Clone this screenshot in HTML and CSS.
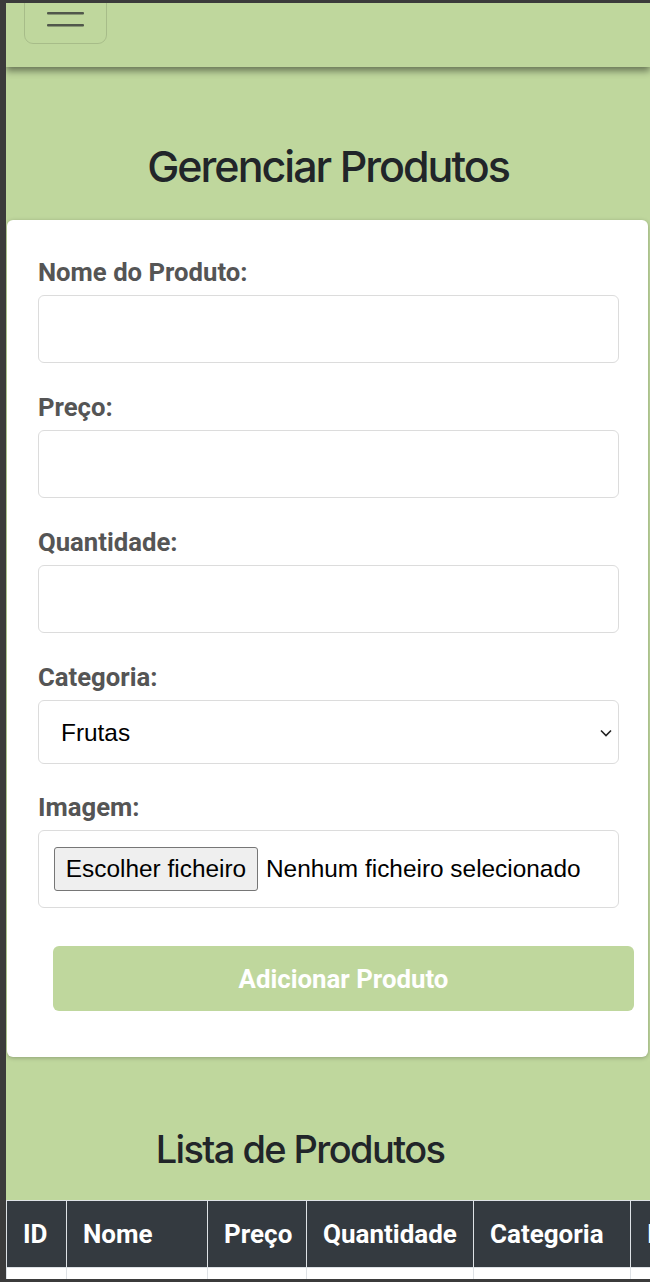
FILE: index.html
```html
<!DOCTYPE html>
<html lang="pt">
<head>
<meta charset="utf-8">
<title>Gerenciar Produtos</title>
<link rel="stylesheet" href="styles.css">
</head>
<body>
<div class="screen">
  <nav class="navbar">
    <button class="toggler" type="button" aria-label="Menu">
      <svg class="toggler-icon" width="37" height="30" viewBox="0 0 37 30">
        <rect x="0" y="1" width="37" height="2.5" rx="1" fill="#50574b"/>
        <rect x="0" y="13" width="37" height="2.5" rx="1" fill="#50574b"/>
        <rect x="0" y="25" width="37" height="2.5" rx="1" fill="#50574b"/>
      </svg>
    </button>
  </nav>

  <h2 class="title">Gerenciar Produtos</h2>

  <form class="card">
    <label class="field-label">Nome do Produto:</label>
    <input class="field-input" type="text">

    <label class="field-label">Preço:</label>
    <input class="field-input" type="text">

    <label class="field-label">Quantidade:</label>
    <input class="field-input" type="text">

    <label class="field-label">Categoria:</label>
    <div class="select-wrap">
      <select class="field-select">
        <option>Frutas</option>
        <option>Legumes</option>
        <option>Verduras</option>
      </select>
      <svg class="chevron" width="12" height="8" viewBox="0 0 12 8">
        <path d="M1 1.5 L6 6.5 L11 1.5" fill="none" stroke="#222" stroke-width="1.6"/>
      </svg>
    </div>

    <label class="field-label">Imagem:</label>
    <div class="file-box">
      <span class="file-btn">Escolher ficheiro</span>
      <span class="file-text">Nenhum ficheiro selecionado</span>
    </div>

    <button class="submit" type="button">Adicionar Produto</button>
  </form>

  <h2 class="list-title">Lista de Produtos</h2>

  <table class="products">
    <thead>
      <tr>
        <th class="c-id">ID</th>
        <th class="c-nome">Nome</th>
        <th class="c-preco">Preço</th>
        <th class="c-qtd">Quantidade</th>
        <th class="c-cat">Categoria</th>
        <th class="c-img">Imagem</th>
        <th class="c-acoes">Ações</th>
      </tr>
    </thead>
    <tbody>
      <tr>
        <td></td><td></td><td></td><td></td><td></td><td></td><td></td>
      </tr>
    </tbody>
  </table>
</div>
</body>
</html>
```

FILE: styles.css
```css
* { box-sizing: border-box; }

html, body {
  margin: 0;
  padding: 0;
}

body {
  background: #3b3b3b;
  overflow: hidden;
  height: 1282px;
}

.screen {
  margin: 3px 0 0 6px;
  height: 1276px;
  background: #bfd79d;
  overflow: hidden;
}

.navbar {
  position: relative;
  z-index: 1;
  height: 64px;
  background: #bfd79d;
  box-shadow: 0 4px 7px rgba(0, 0, 0, 0.45);
  display: flex;
  align-items: flex-start;
}

.toggler {
  margin: -15px 0 0 18px;
  width: 83px;
  height: 56px;
  padding: 0;
  background: transparent;
  border: 1px solid rgba(0, 0, 0, 0.12);
  border-radius: 9px;
  display: flex;
  align-items: flex-start;
  justify-content: center;
  padding-top: 10px;
}

.title {
  margin: 73px 0 28px 0;
  font-family: Inter, "Liberation Sans", sans-serif;
  font-weight: 500;
  font-size: 43px;
  line-height: 52px;
  letter-spacing: -2px;
  text-align: center;
  color: #212529;
}

.card {
  margin-left: 1px;
  width: 641px;
  background: #fff;
  border-radius: 6px;
  box-shadow: 0 1px 4px rgba(0, 0, 0, 0.25);
  padding: 37px 29px 46px 31px;
  display: flex;
  flex-direction: column;
}

.field-label {
  font-family: Roboto, "Liberation Sans", sans-serif;
  font-weight: 700;
  font-size: 25.7px;
  line-height: 30px;
  color: #555;
  margin-bottom: 8px;
}

.field-input {
  width: 581px;
  height: 68px;
  border: 1px solid #dcdcdc;
  border-radius: 6px;
  margin: 0 0 29px 0;
  background: #fff;
}

.select-wrap {
  position: relative;
  width: 581px;
  margin-bottom: 28px;
}

.field-select {
  appearance: none;
  -webkit-appearance: none;
  width: 581px;
  height: 64px;
  border: 1px solid #dcdcdc;
  border-radius: 6px;
  background: #fff;
  padding: 0 0 0 22px;
  font-family: "Liberation Sans", Arial, sans-serif;
  font-size: 24.4px;
  color: #000;
}

.chevron {
  position: absolute;
  right: 7px;
  top: 29px;
}

.file-box {
  width: 581px;
  height: 78px;
  border: 1px solid #dcdcdc;
  border-radius: 6px;
  padding: 0 15px;
  display: flex;
  align-items: center;
  gap: 8px;
}

.file-btn {
  height: 44px;
  width: 204px;
  background: #efefef;
  border: 1px solid #767676;
  border-radius: 3px;
  display: flex;
  align-items: center;
  justify-content: center;
  font-family: "Liberation Sans", Arial, sans-serif;
  font-size: 24.4px;
  color: #000;
}

.file-text {
  font-family: "Liberation Sans", Arial, sans-serif;
  font-size: 24.4px;
  color: #000;
}

.submit {
  margin: 38px 0 0 15px;
  width: 581px;
  height: 65px;
  background: #bfd79d;
  border: none;
  border-radius: 6px;
  color: #fff;
  font-family: Roboto, "Liberation Sans", sans-serif;
  font-weight: 700;
  font-size: 25.8px;
}

.list-title {
  margin: 69px 0 28px 0;
  padding-right: 56px;
  font-family: Inter, "Liberation Sans", sans-serif;
  font-weight: 500;
  font-size: 38px;
  line-height: 46px;
  letter-spacing: -1.6px;
  text-align: center;
  color: #212529;
}

.products {
  border-collapse: collapse;
  table-layout: fixed;
  width: 930px;
}

.products th {
  height: 67px;
  background: #343a40;
  color: #fff;
  font-family: Roboto, "Liberation Sans", sans-serif;
  font-weight: 700;
  font-size: 26px;
  text-align: left;
  padding: 0 16px;
  border: 1px solid #dee2e6;
  white-space: nowrap;
}

.products td {
  height: 60px;
  background: #fff;
  border: 1px solid #dee2e6;
}

.c-id { width: 60px; }
.c-nome { width: 141px; }
.c-preco { width: 99px; }
.c-qtd { width: 167px; }
.c-cat { width: 157px; }
.c-img { width: 150px; }
.c-acoes { width: 156px; }
```
